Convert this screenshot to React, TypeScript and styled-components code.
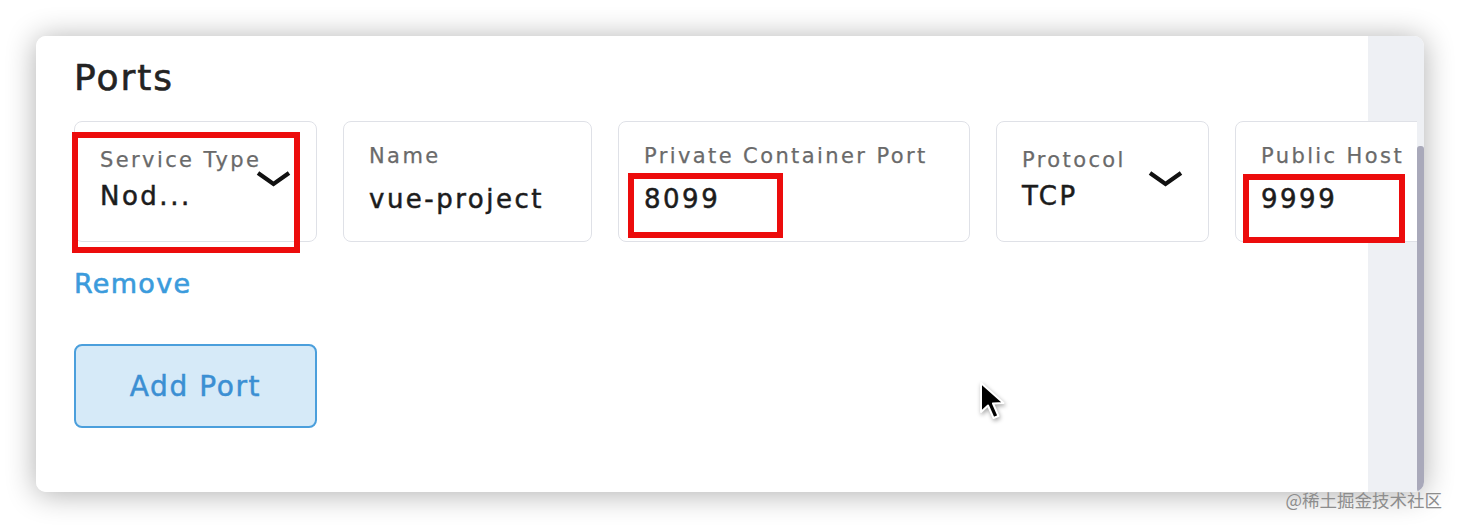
import styled, { createGlobalStyle } from "styled-components";

const GlobalStyle = createGlobalStyle`
  html, body {
    margin: 0;
    background: #fff;
  }
  body {
    font-family: "DejaVu Sans", "Noto Sans", sans-serif;
  }
`;

const Page = styled.div`
  position: relative;
  width: 1460px;
  height: 528px;
  padding: 36px 36px 0;
  box-sizing: border-box;
  overflow: hidden;
`;

const Card = styled.section`
  display: flex;
  height: 456px;
  border-radius: 10px;
  background: #fff;
  box-shadow: 0 2px 30px rgba(0, 0, 0, 0.32);
  overflow: hidden;
`;

// the grey strip on the right is the gutter next to the scrollbar
const Body = styled.div`
  flex: 1;
  min-width: 0;
  padding: 22px 0 0 38px;
  background: linear-gradient(
    to right,
    #fff calc(100% - 49px),
    #eef0f4 calc(100% - 49px)
  );
  overflow: hidden;
`;

const Title = styled.h2`
  margin: 0;
  font-size: 36px;
  line-height: 40px;
  font-weight: 400;
  letter-spacing: 2px;
  color: #232323;
  -webkit-text-stroke: 0.6px currentColor;
`;

const FieldRow = styled.div`
  display: flex;
  gap: 26px;
  margin-top: 23px;
`;

const Field = styled.div<{ $w: number; $select?: boolean }>`
  position: relative;
  flex: 0 0 ${(p) => p.$w}px;
  min-width: 0;
  height: 121px;
  box-sizing: border-box;
  display: flex;
  padding: ${(p) => (p.$select ? 26 : 22)}px 24px 0 25px;
  border: 1.5px solid #dfe1e7;
  border-radius: 8px;
  background: #fff;
`;

const FieldText = styled.div<{ $select?: boolean }>`
  flex: 1;
  min-width: 0;
  display: flex;
  flex-direction: column;
  gap: ${(p) => (p.$select ? 8 : 15)}px;
`;

const Label = styled.span`
  font-size: 21px;
  line-height: 24px;
  letter-spacing: 2.4px;
  color: #6a6a6a;
  white-space: nowrap;
  -webkit-text-stroke: 0.25px currentColor;
`;

const Value = styled.span`
  font-size: 26px;
  line-height: 32px;
  letter-spacing: 2.5px;
  color: #1c1c1c;
  white-space: nowrap;
  -webkit-text-stroke: 0.5px currentColor;
`;

const Chevron = styled.svg`
  flex: none;
  margin-top: 22px;
`;

const Highlight = styled.div<{ $x: number; $y: number; $w: number; $h: number }>`
  position: absolute;
  left: ${(p) => p.$x}px;
  top: ${(p) => p.$y}px;
  width: ${(p) => p.$w}px;
  height: ${(p) => p.$h}px;
  box-sizing: border-box;
  border: 6px solid #ec0c0c;
  pointer-events: none;
`;

const RemoveLink = styled.a`
  display: block;
  width: fit-content;
  margin-top: 26px;
  font-size: 27px;
  line-height: 32px;
  letter-spacing: 1.3px;
  color: #3b9bdc;
  cursor: pointer;
  -webkit-text-stroke: 0.6px currentColor;
`;

const AddButton = styled.button`
  display: block;
  margin-top: 44px;
  width: 243px;
  height: 84px;
  box-sizing: border-box;
  border: 2px solid #4b9fdc;
  border-radius: 8px;
  background: #d6eaf8;
  color: #3b8fd3;
  font-family: inherit;
  font-size: 28px;
  letter-spacing: 1.6px;
  cursor: pointer;
  -webkit-text-stroke: 0.5px currentColor;
`;

const ScrollTrack = styled.div`
  flex: none;
  display: flex;
  width: 7px;
  padding-top: 110px;
  box-sizing: border-box;
  background: #eef0f4;
`;

const Thumb = styled.div`
  flex: 1;
  border-radius: 3px;
  background: #a9a9ba;
`;

const Cursor = styled.svg`
  position: absolute;
  left: 979px;
  top: 381px;
  filter: drop-shadow(1px 2px 2px rgba(0, 0, 0, 0.35));
`;

const Watermark = styled.span`
  position: absolute;
  right: 18px;
  top: 491px;
  font-family: "Noto Sans CJK SC", "Noto Sans", sans-serif;
  font-size: 17.5px;
  line-height: 1;
  color: #8d8d8d;
`;

const ChevronIcon = () => (
  <Chevron width="37" height="17" viewBox="0 0 37 17">
    <path
      d="M3 3 L18.5 14 L34 3"
      fill="none"
      stroke="#111"
      strokeWidth="4.2"
      strokeLinejoin="miter"
    />
  </Chevron>
);

type Port = {
  label: string;
  value: string;
  width: number;
  select?: boolean;
  mark?: { x: number; y: number; w: number; h: number };
};

const ports: Port[] = [
  {
    label: "Service Type",
    value: "Nod...",
    width: 243,
    select: true,
    mark: { x: -3, y: 10, w: 228, h: 121 },
  },
  { label: "Name", value: "vue-project", width: 249 },
  {
    label: "Private Container Port",
    value: "8099",
    width: 352,
    mark: { x: 9, y: 51, w: 155, h: 65 },
  },
  { label: "Protocol", value: "TCP", width: 213, select: true },
  {
    label: "Public Host",
    value: "9999",
    width: 243,
    mark: { x: 7, y: 52, w: 162, h: 69 },
  },
];

const App = () => {
  return (
    <Page>
      <GlobalStyle />
      <Card>
        <Body>
          <Title>Ports</Title>
          <FieldRow>
            {ports.map((port) => (
              <Field key={port.label} $w={port.width} $select={port.select}>
                <FieldText $select={port.select}>
                  <Label>{port.label}</Label>
                  <Value>{port.value}</Value>
                </FieldText>
                {port.select && <ChevronIcon />}
                {port.mark && (
                  <Highlight
                    $x={port.mark.x}
                    $y={port.mark.y}
                    $w={port.mark.w}
                    $h={port.mark.h}
                  />
                )}
              </Field>
            ))}
          </FieldRow>
          <RemoveLink>Remove</RemoveLink>
          <AddButton type="button">Add Port</AddButton>
        </Body>
        <ScrollTrack>
          <Thumb />
        </ScrollTrack>
      </Card>
      <Cursor width="30" height="42" viewBox="0 0 30 42">
        <path
          d="M2 2 L2 31 L9 24.5 L14.5 37 L19.5 35 L14 22.5 L24.5 22 Z"
          fill="#000"
          stroke="#fff"
          strokeWidth="2"
          strokeLinejoin="round"
        />
      </Cursor>
      <Watermark>@稀土掘金技术社区</Watermark>
    </Page>
  );
};

export default App;
